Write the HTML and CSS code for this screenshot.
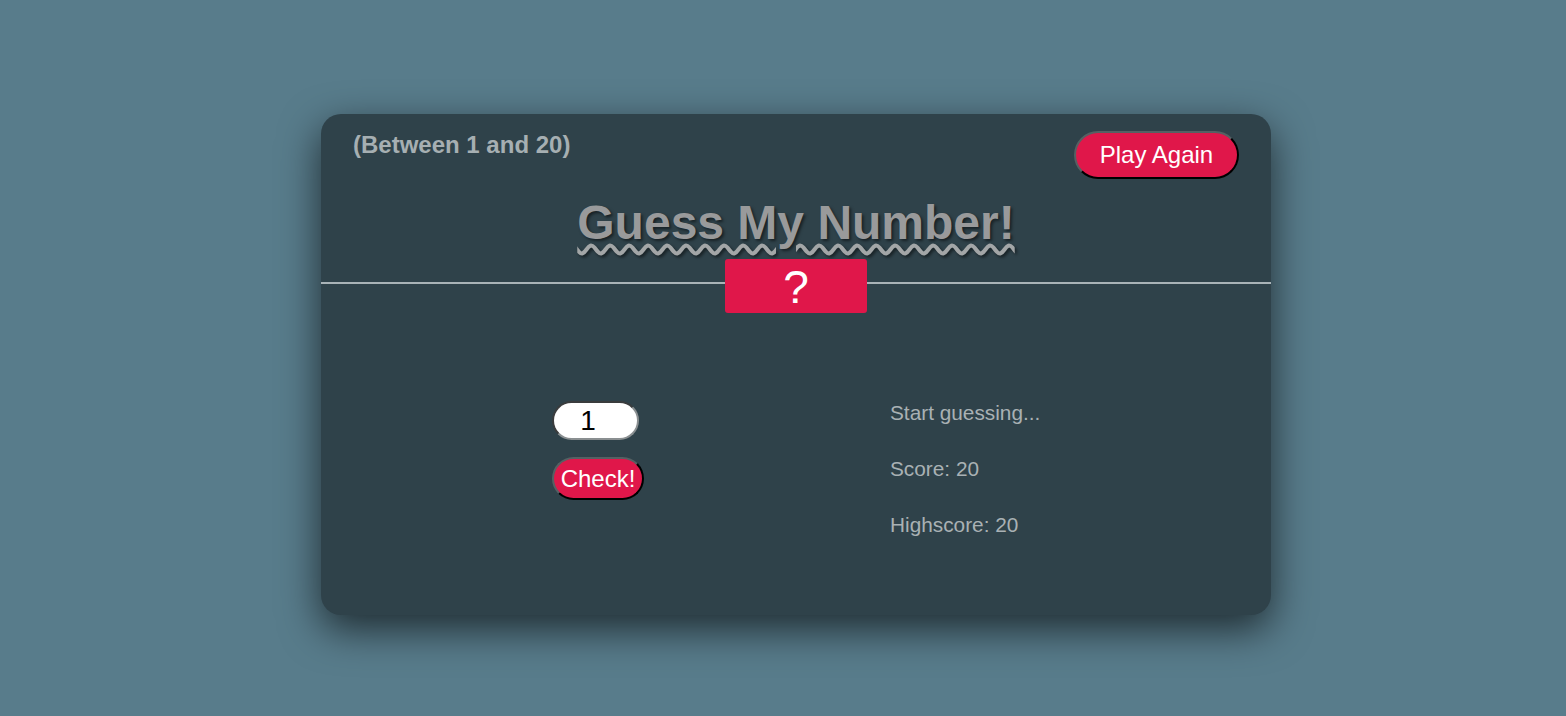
FILE: index.html
```html
<!DOCTYPE html>
<html lang="en">
<head>
<meta charset="utf-8">
<title>Guess My Number!</title>
<link rel="stylesheet" href="styles.css">
</head>
<body>
<div class="page">
  <div class="card">
    <header class="header">
      <div class="top-row">
        <p class="between">(Between 1 and 20)</p>
        <button class="btn again">Play Again</button>
      </div>
      <h1 class="title">Guess My Number!</h1>
      <div class="number">?</div>
    </header>
    <main class="main">
      <section class="left">
        <input type="number" class="guess" value="1">
        <button class="btn check">Check!</button>
      </section>
      <section class="right">
        <p class="line">Start guessing...</p>
        <p class="line">Score: 20</p>
        <p class="line">Highscore: 20</p>
      </section>
    </main>
  </div>
</div>
</body>
</html>
```

FILE: styles.css
```css
* { box-sizing: border-box; }
html, body {
  margin: 0;
  padding: 0;
  height: 100%;
  background: #587c8b;
  font-family: "Liberation Sans", Arial, sans-serif;
}
.page {
  padding-left: 26px;
  padding-top: 114px;
}
.card {
  width: 950px;
  height: 501px;
  margin: 0 auto;
  background: #2f424a;
  border-radius: 20px;
  box-shadow: 0 14px 40px rgba(0, 0, 0, 0.65);
}
.header {
  padding-top: 17px;
  border-bottom: 2px solid #a9b3b7;
  display: flex;
  flex-direction: column;
  align-items: center;
}
.top-row {
  width: 100%;
  display: flex;
  justify-content: space-between;
  align-items: flex-start;
  padding: 0 32px;
}
.between {
  margin: 0;
  font-size: 24px;
  font-weight: bold;
  color: #a6afb2;
}
.btn {
  font-family: "Liberation Sans", Arial, sans-serif;
  font-size: 24px;
  color: #fff;
  background: #e0174a;
  border: 2px solid;
  border-color: #566063 #000 #000 #566063;
  border-radius: 24px;
  cursor: pointer;
}
.again {
  width: 165px;
  height: 48px;
  padding: 0;
}
.title {
  margin: 20px 0 0;
  font-size: 48px;
  line-height: 48px;
  font-weight: bold;
  color: #999a9b;
  text-decoration-line: underline;
  text-decoration-style: wavy;
  text-decoration-color: #a3a6a7;
  text-decoration-thickness: 4px;
  text-underline-offset: 5px;
  text-shadow: 2px 2px 3px rgba(0, 0, 0, 0.5);
}
.number {
  margin-top: 12px;
  margin-bottom: -31px;
  width: 15%;
  height: 54px;
  background: #e0174a;
  border-radius: 3px;
  color: #fff;
  font-size: 46px;
  line-height: 56px;
  text-align: center;
}
.main {
  display: flex;
  align-items: flex-start;
  padding-top: 101px;
  padding-left: 231px;
}
.left {
  width: 338px;
  padding-top: 16px;
  display: flex;
  flex-direction: column;
  align-items: flex-start;
  gap: 17px;
}
.guess {
  width: 87px;
  height: 39px;
  border: 2px inset #8a8f91;
  border-radius: 20px;
  background: #fff;
  font-family: "Liberation Sans", Arial, sans-serif;
  font-size: 28px;
  text-align: center;
  padding: 0 4px;
  color: #000;
}
.check {
  width: 92px;
  height: 43px;
  padding: 0;
}
.right {
  display: flex;
  flex-direction: column;
}
.line {
  margin: 0;
  font-size: 20.8px;
  line-height: 56px;
  color: #a9b1b4;
}
```
